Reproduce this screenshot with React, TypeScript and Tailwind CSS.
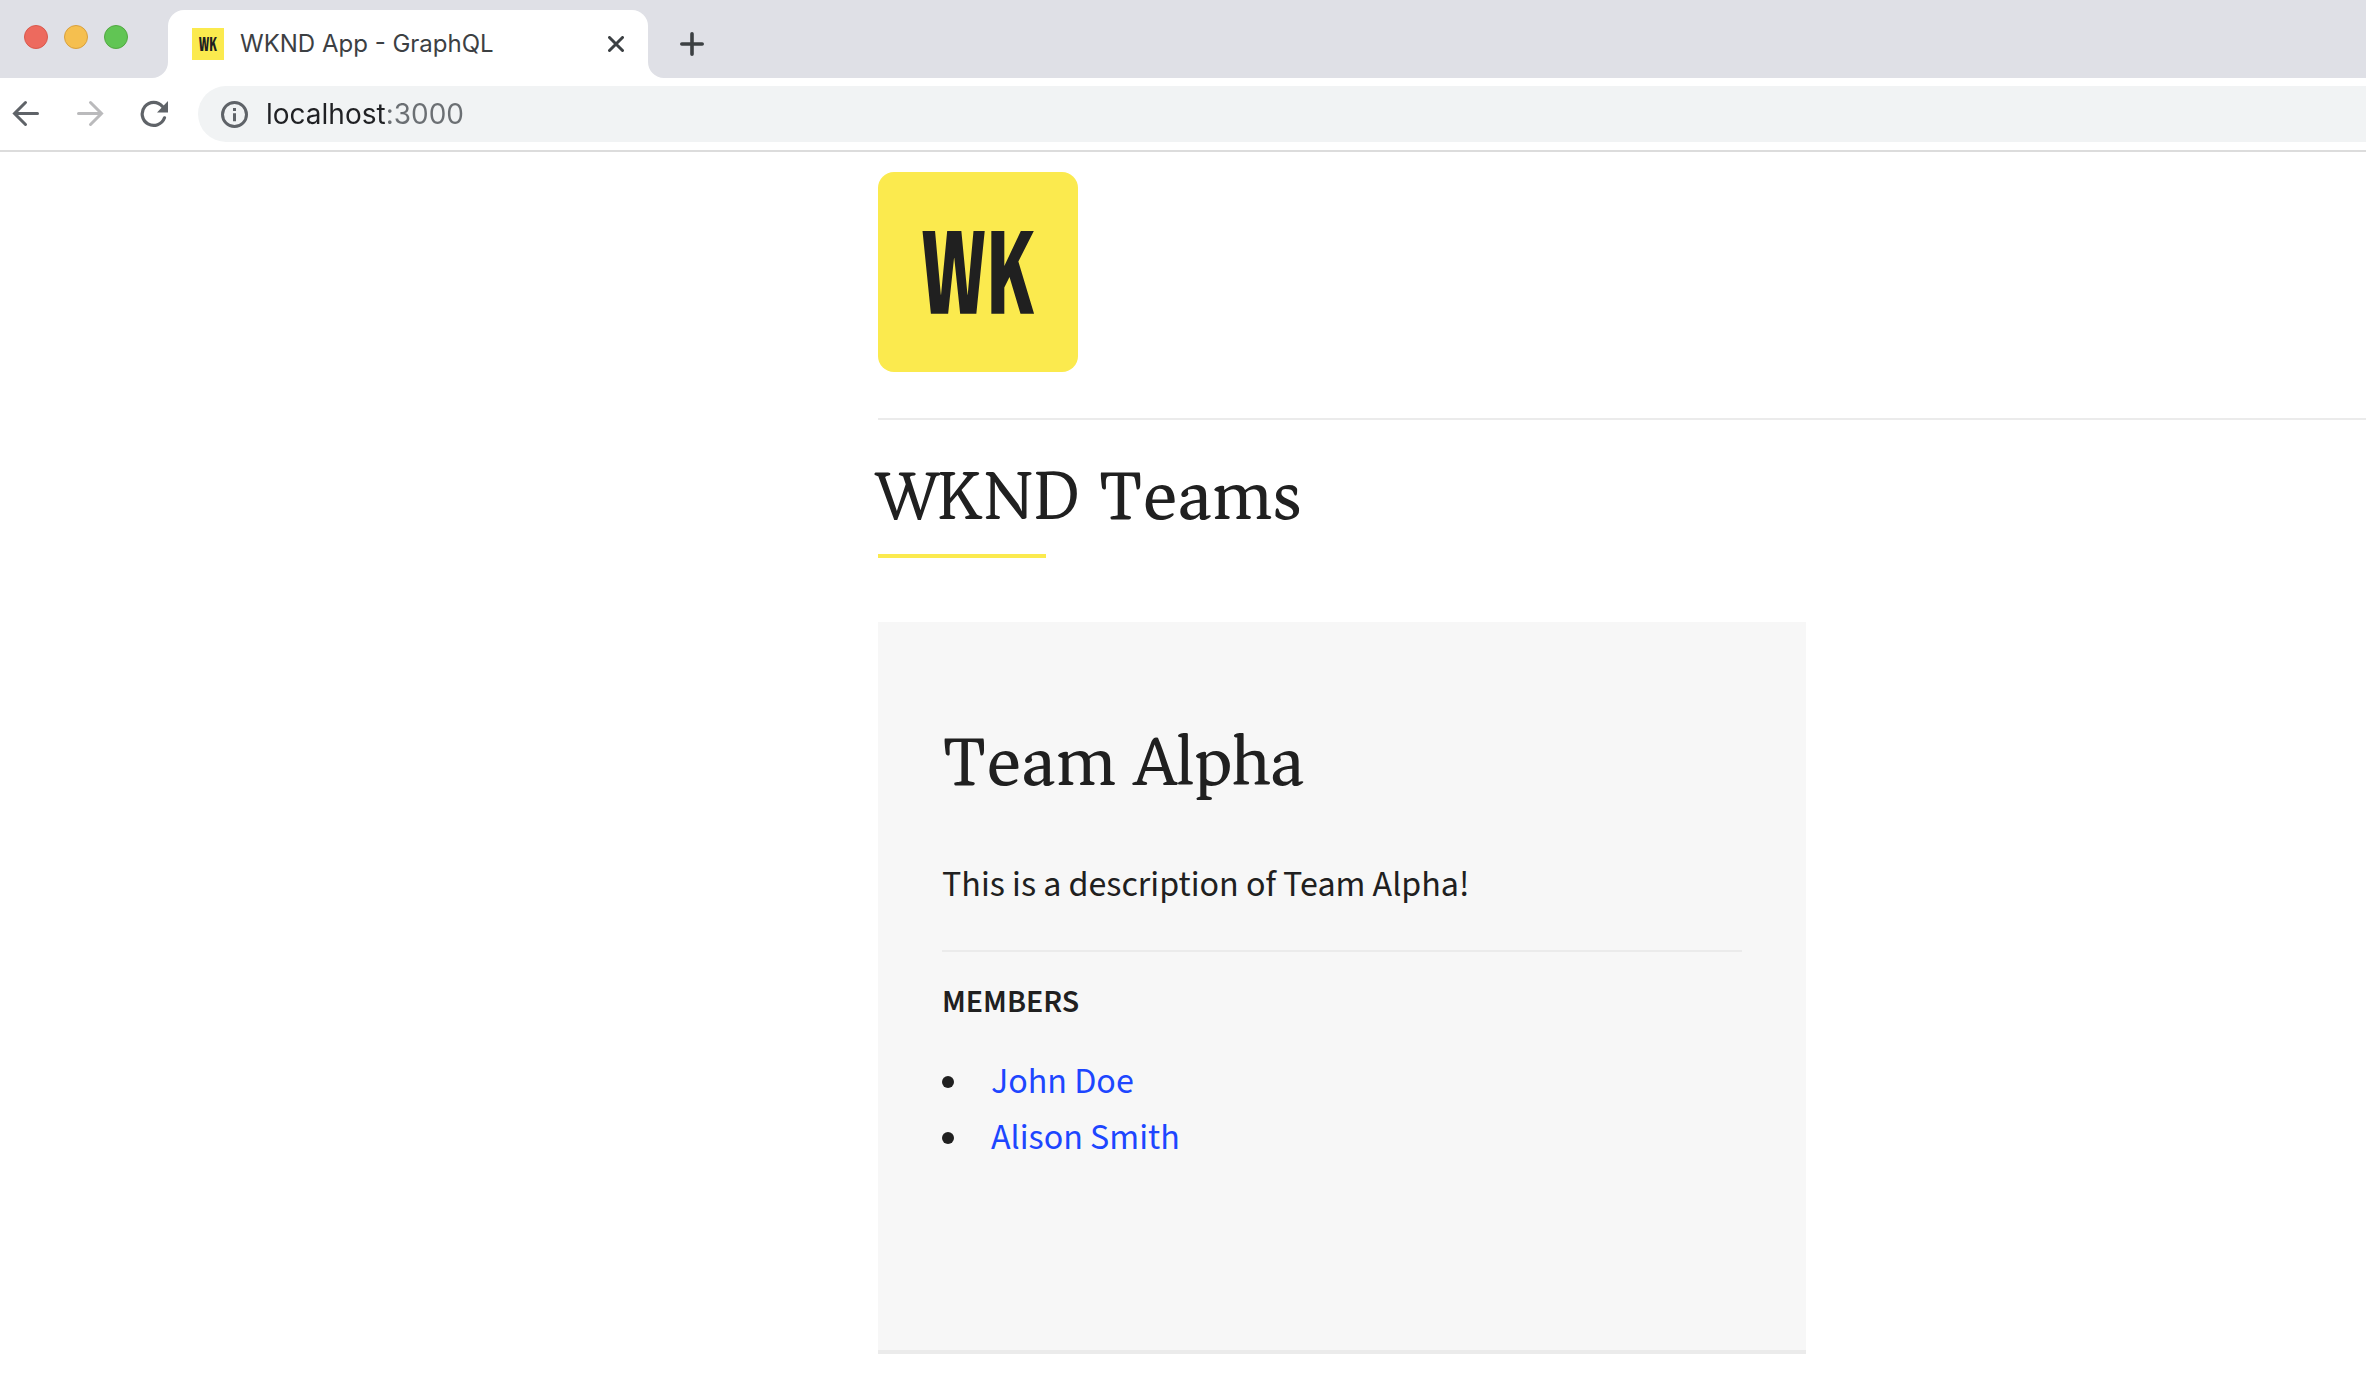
import React from "react";

const members = ["John Doe", "Alison Smith"];

function Logo({ className }: { className: string }) {
  return (
    <svg viewBox="0 0 200 200" className={className} role="img" aria-label="WK">
      <rect width="200" height="200" fill="#fbea4e" />
      <text
        x="100"
        y="142"
        textAnchor="middle"
        fontSize="118"
        fill="#202020"
        className="font-['Bebas_Neue','Roboto_Condensed','Liberation_Sans_Narrow',sans-serif]"
      >
        WK
      </text>
    </svg>
  );
}

function TabStrip() {
  return (
    <div className="flex h-[78px] items-end bg-[#dfe0e6] pl-6">
      <div className="flex h-full w-32 shrink-0 gap-4 pt-[25px]">
        <button aria-label="Close window" className="size-6 rounded-full border border-[#d9594d] bg-[#ed6a5e]" />
        <button aria-label="Minimize window" className="size-6 rounded-full border border-[#d8a03e] bg-[#f5bf4f]" />
        <button aria-label="Zoom window" className="size-6 rounded-full border border-[#52a842] bg-[#61c554]" />
      </div>
      <svg className="size-4 shrink-0" viewBox="0 0 16 16" aria-hidden="true">
        <path d="M16 0v16H0A16 16 0 0 0 16 0z" fill="#fff" />
      </svg>
      <div className="flex h-[68px] w-[480px] items-center rounded-t-2xl bg-white px-6">
        <Logo className="size-8 shrink-0" />
        <span className="ml-4 flex-1 font-[Inter,sans-serif] text-[24px] leading-8 text-[#3c4043]">WKND App - GraphQL</span>
        <button aria-label="Close tab" className="text-[#3c4043]">
          <svg className="size-4" viewBox="0 0 16 16" fill="none" stroke="currentColor" strokeWidth="3" strokeLinecap="round">
            <path d="M1.5 1.5l13 13M14.5 1.5l-13 13" />
          </svg>
        </button>
      </div>
      <svg className="size-4 shrink-0" viewBox="0 0 16 16" aria-hidden="true">
        <path d="M0 0v16h16A16 16 0 0 1 0 0z" fill="#fff" />
      </svg>
      <button aria-label="New tab" className="mb-[22px] ml-4 text-[#3c4043]">
        <svg className="size-6" viewBox="0 0 24 24" fill="none" stroke="currentColor" strokeWidth="3.6" strokeLinecap="round">
          <path d="M12 1.8v20.4M1.8 12h20.4" />
        </svg>
      </button>
    </div>
  );
}

function Toolbar() {
  return (
    <div className="flex items-center border-b-2 border-[#dcdcdc] bg-white py-2 pl-3">
      <button aria-label="Back" className="text-[#5f6368]">
        <svg className="size-7" viewBox="0 0 28 28" fill="none" stroke="currentColor" strokeWidth="3" strokeLinecap="round">
          <path d="M25.500 13.500H3M13.500 2.500L2.500 13.500l11 11" />
        </svg>
      </button>
      <button aria-label="Forward" disabled className="ml-9 text-[#bababc]">
        <svg className="size-7" viewBox="0 0 28 28" fill="none" stroke="currentColor" strokeWidth="3" strokeLinecap="round">
          <path d="M2.500 13.500h22.500M14.500 2.500l11 11-11 11" />
        </svg>
      </button>
      <button aria-label="Reload" className="ml-9 text-[#5f6368]">
        <svg className="size-7" viewBox="0 0 28 28" fill="none">
          <path d="M24.500 17.800A11.500 11.500 0 1 1 22.500 6.500" stroke="currentColor" strokeWidth="3.2" strokeLinecap="round" />
          <path d="M28 1v11.500H17z" fill="currentColor" />
        </svg>
      </button>
      <div className="ml-[30px] flex h-14 flex-1 items-center rounded-l-full bg-[#f1f3f4] pl-[23px]">
        <svg className="size-7 shrink-0" viewBox="0 0 28 28" fill="none" aria-hidden="true">
          <circle cx="13.500" cy="14.500" r="12" stroke="#5f6368" strokeWidth="3" />
          <path d="M12 13.300h3v8h-3zM12 8h3v3h-3z" fill="#5f6368" />
        </svg>
        <input
          aria-label="Address"
          defaultValue="localhost:3000"
          className="ml-[17px] h-10 min-w-0 flex-1 bg-linear-to-r from-[#202124] from-[120px] to-[#6b6f73] to-[120px] bg-clip-text font-[Inter,sans-serif] text-[28px] text-transparent outline-none"
        />
      </div>
    </div>
  );
}

export default function App() {
  return (
    <div className="min-h-screen bg-white">
      <TabStrip />
      <Toolbar />
      <div className="ml-[878px] pt-5 font-['Source_Sans_Pro','Source_Sans_3','Noto_Sans_CJK_SC',sans-serif] text-[#202020]">
        <header className="border-b-2 border-[#ebebeb] pb-[46px]">
          <Logo className="size-[200px] rounded-2xl" />
        </header>
        <main>
          <h1 className="mt-9 font-['Asar','Noto_Serif_CJK_SC','Liberation_Serif',serif] text-[72px] leading-[80px]">WKND Teams</h1>
          <div className="mt-[18px] h-1 w-[168px] bg-[#fbea4e]" />
          <section className="mt-16 max-w-[928px] border-b-4 border-[#ebebeb] bg-[#f7f7f7] px-16 pt-[100px] pb-[184px]">
            <h2 className="font-['Asar','Noto_Serif_CJK_SC','Liberation_Serif',serif] text-[72px] leading-[80px]">Team Alpha</h2>
            <p className="mt-[55px] text-[36px] leading-[56px]">This is a description of Team Alpha!</p>
            <hr className="mt-[37px] border-t-2 border-[#ebebeb]" />
            <h3 className="mt-[30px] text-[32px] leading-10 font-semibold">MEMBERS</h3>
            <ul className="mt-8 text-[36px] leading-[56px]">
              {members.map((name) => (
                <li key={name} className="flex items-center">
                  <span className="mr-[37px] size-3 rounded-full bg-[#202020]" />
                  <a href="#" className="text-[#1d46ff]">{name}</a>
                </li>
              ))}
            </ul>
          </section>
        </main>
      </div>
    </div>
  );
}
